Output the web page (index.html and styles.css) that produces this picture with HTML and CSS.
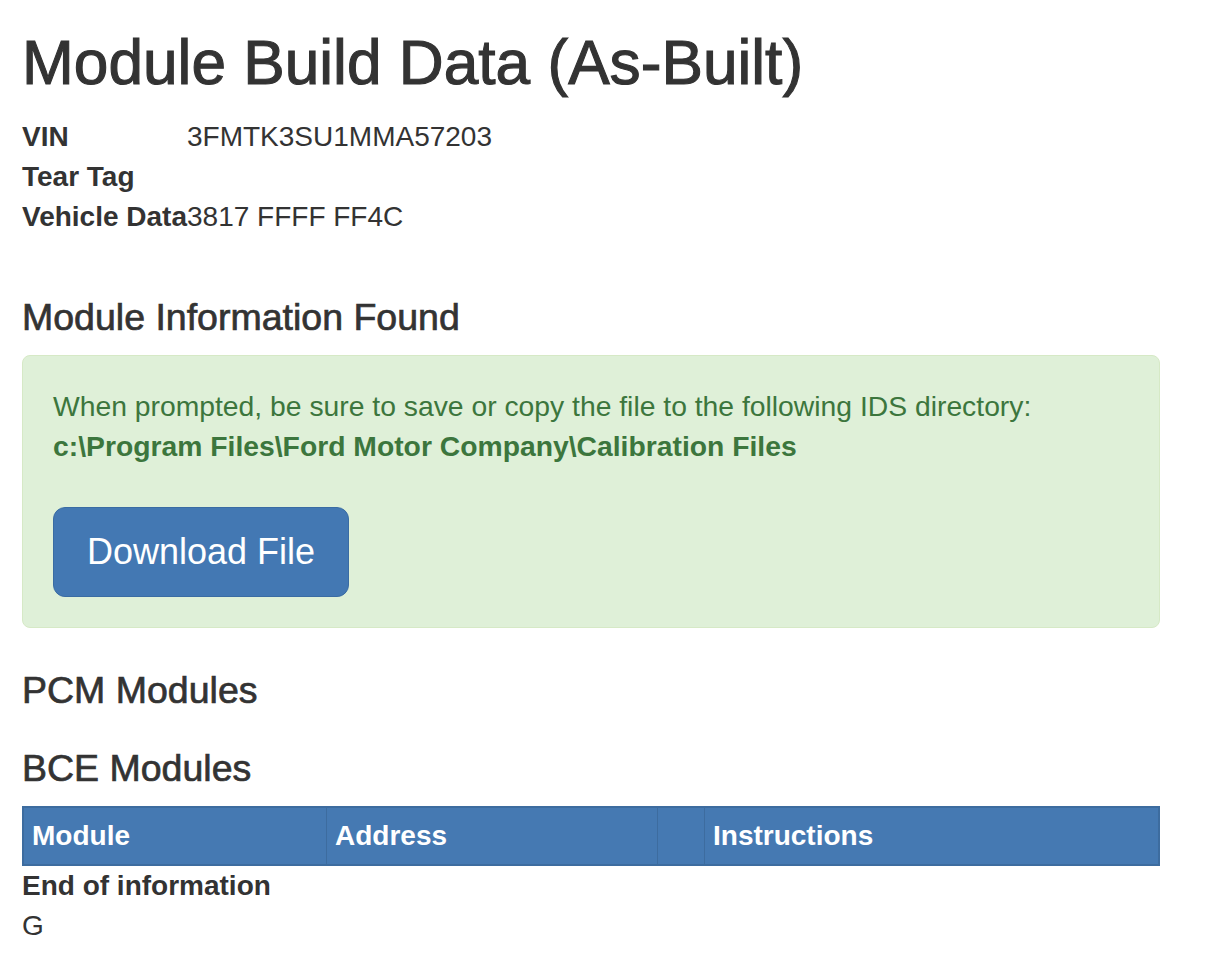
FILE: index.html
```html
<!DOCTYPE html>
<html lang="en">
<head>
    <meta charset="UTF-8">
    <meta name="viewport" content="width=device-width, initial-scale=1.0">
    <title>Module Build Data (As-Built)</title>
    <link rel="stylesheet" href="styles.css">
</head>
<body>

    <div class="page">
        <h1 class="page-title">Module Build Data (As-Built)</h1>

        <!-- Datos del vehiculo -->
        <dl class="vehicle-info">
            <dt>VIN</dt>
            <dd>3FMTK3SU1MMA57203</dd>
            <dt>Tear Tag</dt>
            <dd></dd>
            <dt>Vehicle Data</dt>
            <dd>3817 FFFF FF4C</dd>
        </dl>

        <h4 class="section-title">Module Information Found</h4>
        <div class="alert-success">
            <p>When prompted, be sure to save or copy the file to the following IDS directory:<br>
            <strong>c:\Program Files\Ford Motor Company\Calibration Files</strong></p>
            <div>
                <button class="btn-download">Download File</button>
            </div>
        </div>

        <h4 class="section-title">PCM Modules</h4>

        <h4 class="section-title">BCE Modules</h4>
        <table class="module-table">
            <thead>
                <tr>
                    <th class="col-module">Module</th>
                    <th class="col-address">Address</th>
                    <th class="col-blank"></th>
                    <th>Instructions</th>
                </tr>
            </thead>
        </table>

        <div class="end-info">End of information</div>
        <div class="footer-letter">G</div>
    </div>

</body>
</html>
```

FILE: styles.css
```css
body {
    font-family: "Liberation Sans", Arial, sans-serif;
    font-size: 28px;
    line-height: 40px;
    color: #333;
    background-color: #fff;
    margin: 0;
}

.page {
    display: flex;
    flex-direction: column;
    width: 1138px;
    margin-left: 22px;
}

.page-title {
    font-size: 62.2px;
    font-weight: normal;
    line-height: 66px;
    margin: 30px 0 21px;
    -webkit-text-stroke: 1.1px #333;
}

.vehicle-info {
    display: grid;
    grid-template-columns: 165px 1fr;
    margin: 0 0 40px;
}

.vehicle-info dt {
    font-weight: bold;
    white-space: nowrap;
}

.vehicle-info dd {
    margin: 0;
    min-height: 40px;
}

.section-title {
    font-size: 37.5px;
    font-weight: normal;
    line-height: 40px;
    margin: 20px 0 18px;
    -webkit-text-stroke: 0.7px #333;
}

.alert-success {
    background-color: #dff0d8;
    border: 1px solid #d6e9c6;
    border-radius: 8px;
    color: #3c763d;
    padding: 30px;
    margin-bottom: 22px;
}

.alert-success p {
    margin: 0 0 41px;
    font-size: 28.3px;
}

.btn-download {
    font-family: "Liberation Sans", Arial, sans-serif;
    font-size: 36px;
    line-height: 48px;
    color: #fff;
    background-color: #4378b3;
    border: 1px solid #3a6ca3;
    border-radius: 12px;
    padding: 20px 33px;
    cursor: pointer;
    vertical-align: top;
}

.module-table {
    width: 100%;
    border-collapse: collapse;
    border: 2px solid #3d6c9f;
    background-color: #4579b2;
}

.module-table th {
    color: #fff;
    font-weight: bold;
    text-align: left;
    padding: 8px 8px;
    line-height: 40px;
    border-left: 1px solid #3d6c9f;
}

.module-table .col-module {
    width: 286px;
}

.module-table .col-address {
    width: 314px;
}

.module-table .col-blank {
    width: 30px;
}

.end-info {
    font-weight: bold;
}
```
